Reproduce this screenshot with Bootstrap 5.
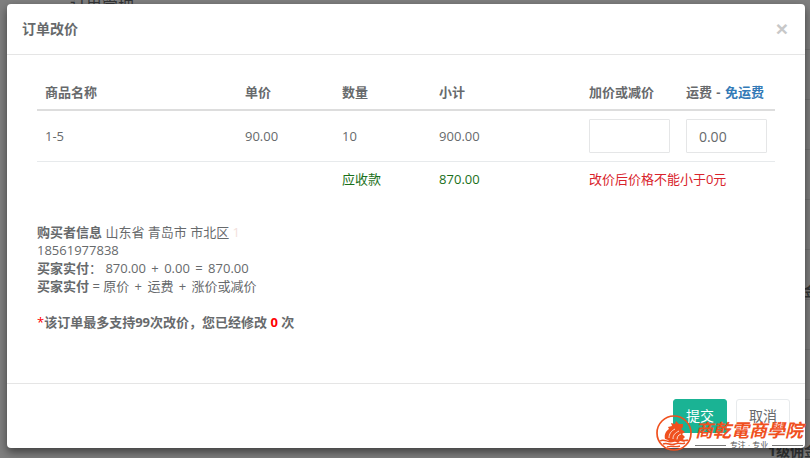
<!DOCTYPE html>
<html lang="zh-CN">
<head>
<meta charset="utf-8">
<meta name="viewport" content="width=device-width, initial-scale=1">
<title>订单改价</title>
<link href="https://cdn.jsdelivr.net/npm/bootstrap@5.3.0/dist/css/bootstrap.min.css" rel="stylesheet">
<style>
body{font-family:"Open Sans","Noto Sans CJK SC",sans-serif;font-size:13px;line-height:18px;color:#676a6c;background:#7f7f7f;min-height:100vh;overflow:hidden}
/* page under the dimmed backdrop */
.under-page{position:absolute;inset:0;overflow:hidden;color:#333536}
.under-title{font-size:16px;line-height:20px;margin:-6px 0 0 70px;font-weight:400}
.under-rows{position:absolute;top:49px;right:0;width:40px}
.under-rows div{border-top:1px solid #737373;height:50px}
.under-label{position:absolute;right:-8px;font-size:14px;font-weight:700}
.under-first{top:282px}
.under-second{bottom:-2px}
.order-dialog{max-width:none;margin:4px 5px 10px 7px}
.order-dialog .modal-content{background:#fff;color:inherit;border:0;border-radius:4px;box-shadow:0 4px 10px rgba(0,0,0,.5)}
.order-dialog .modal-header{padding:15px;border-bottom:1px solid #e5e5e5;height:51px}
.order-dialog .modal-title{font-size:14px;line-height:20px;font-weight:700}
.dismiss{border:0;background:none;padding:0 2px;font-family:"Liberation Sans",sans-serif;font-size:21px;line-height:20px;font-weight:700;color:#c8c8c8}
.order-dialog .modal-body{padding:20px 30px 52px}
.price-table{--bs-table-bg:transparent;--bs-table-color:#676a6c;color:inherit;table-layout:fixed;margin-bottom:27px}
.price-table>:not(caption)>*>*{padding:8px;border-color:#e7eaec;white-space:nowrap;vertical-align:middle}
.price-table>thead>tr>th{border-bottom:2px solid #ddd}
.price-table>tbody>tr:last-child>td{border-bottom:0}
.c-name{width:27.1%}.c-std{width:13.15%}.c-sum{width:20.3%}
.price-table a{color:#337ab7}
.dash{padding:0 1px}
.price-input{height:34px;border:1px solid #e5e6e7;border-radius:1px;padding:6px 12px;font-size:14px;line-height:20px;color:#676a6c}
.price-table>tbody>tr>td.due{color:#1a701a}
.price-table>tbody>tr>td.warn{color:#d9232c}
.operator{padding:0 2px}
.edit-limit{margin-top:18px}
.hot{color:#f00}
.cut{color:#f3dfdc}
.order-dialog .modal-footer{padding:15px;border-top:1px solid #e5e5e5;gap:9px}
.order-dialog .modal-footer .btn{margin:0;padding:6px 12px;font-size:14px;line-height:20px;border-radius:3px}
.btn-save{background:#1ab394;border-color:#1ab394;color:#fff}
.btn-save:hover{background:#18a689;color:#fff}
.btn-quit{background:#fff;border-color:#e7eaec;color:#676a6c}
.school-stamp{position:absolute;right:7px;bottom:6px;z-index:5;pointer-events:none;gap:3px}
.school-name{font-family:"Noto Sans CJK TC",sans-serif;font-size:18px;line-height:24px;font-weight:700;font-style:italic;color:#f0501e;white-space:nowrap}
.school-motto{font-size:8px;line-height:8px;color:#555}
.school-motto i{height:1px;background:#777}
</style>
<script src="https://cdn.jsdelivr.net/npm/bootstrap@5.3.0/dist/js/bootstrap.bundle.min.js"></script>
</head>
<body class="position-relative">
<div class="under-page" aria-hidden="true">
  <p class="under-title">订单管理</p>
  <div class="under-rows"><div></div><div></div><div></div><div></div><div></div><div></div><div></div><div></div></div>
  <span class="under-label under-first">佣金</span>
  <span class="under-label under-second">1级佣金</span>
</div>

<div class="modal-dialog order-dialog position-relative" role="dialog" aria-labelledby="dialogTitle">
  <form class="modal-content">
    <div class="modal-header d-flex align-items-center justify-content-between">
      <h1 class="modal-title" id="dialogTitle">订单改价</h1>
      <button type="button" class="dismiss" aria-label="关闭">×</button>
    </div>
    <div class="modal-body">
      <table class="table price-table">
        <colgroup><col class="c-name"><col class="c-std"><col class="c-std"><col class="c-sum"><col class="c-std"><col class="c-std"></colgroup>
        <thead>
          <tr><th>商品名称</th><th>单价</th><th>数量</th><th>小计</th><th><label for="adjust">加价或减价</label></th><th><label for="freight">运费</label> <span class="dash">-</span> <a href="#" class="text-decoration-none">免运费</a></th></tr>
        </thead>
        <tbody>
          <tr><td>1-5</td><td>90.00</td><td>10</td><td>900.00</td><td><input type="text" class="form-control price-input" id="adjust"></td><td><input type="text" class="form-control price-input" id="freight" value="0.00"></td></tr>
          <tr><td></td><td></td><td class="due">应收款</td><td class="due">870.00</td><td colspan="2" class="warn">改价后价格不能小于0元</td></tr>
        </tbody>
      </table>
      <div><b>购买者信息</b> 山东省 青岛市 市北区 <span class="cut">1</span></div>
      <div>18561977838</div>
      <div><b>买家实付</b>： 870.00 <span class="operator">+</span> 0.00 <span class="operator">=</span> 870.00</div>
      <div><b>买家实付</b> = 原价 <span class="operator">+</span> 运费 <span class="operator">+</span> 涨价或减价</div>
      <div class="edit-limit fw-bold"><span class="hot fw-normal">*</span>该订单最多支持99次改价，您已经修改 <span class="hot">0</span> 次</div>
    </div>
    <div class="modal-footer">
      <button type="submit" class="btn btn-save">提交</button>
      <button type="button" class="btn btn-quit">取消</button>
    </div>
  </form>
</div>

<div class="school-stamp d-flex align-items-center">
  <svg width="36" height="38" viewBox="0 0 36 38" aria-hidden="true">
    <circle cx="18" cy="19" r="17" fill="none" stroke="#f0501e" stroke-width="1.7"/>
    <path d="M9 25c-1-5 1-8 4-10l-1-2 4-1-1-3 4 1 1-3 3 3 4 0 0 3-2 2 4 3-3 2 3 3-2 2 2 3-5-1-2 2-4-2-4 1-2-2z" fill="#f0501e"/>
    <path d="M13 24c0-4 2-7 6-9m-2 10c0-4 2-6 6-8m-2 9c0-3 1-5 4-6" fill="none" stroke="#fbe0d4" stroke-width="1"/>
    <path d="M4 27c5-3 8 3 14 0s9 1 14-1M7 30c5-2 7 2 12 0s6 1 10-1M11 33c5-2 8 1 13-1" fill="none" stroke="#f0501e" stroke-width="1.4"/>
  </svg>
  <div>
    <div class="school-name">商乾電商學院</div>
    <div class="school-motto d-flex align-items-center gap-1"><i class="flex-fill"></i><span>专注 · 专业</span><i class="flex-fill"></i></div>
  </div>
</div>
</body>
</html>
